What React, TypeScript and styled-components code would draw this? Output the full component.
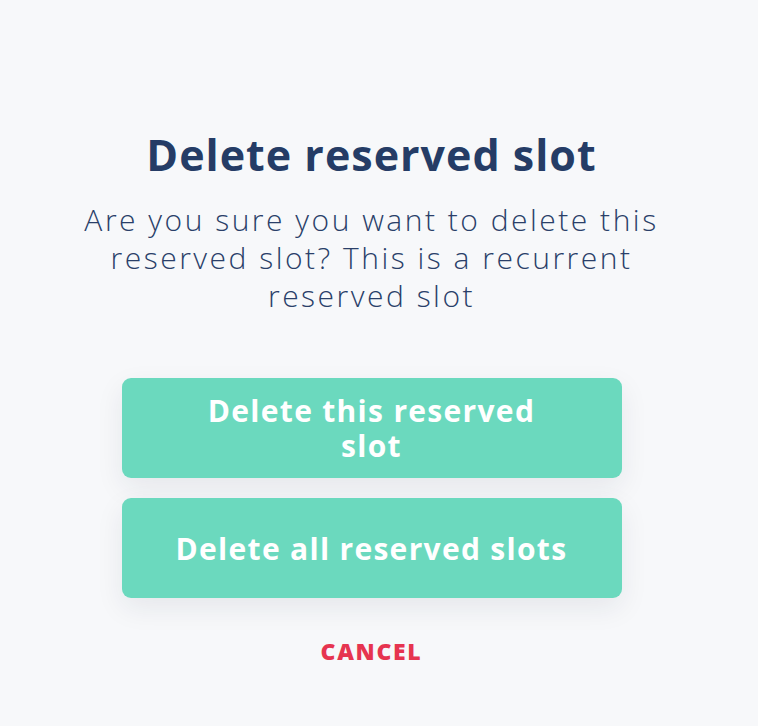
import styled, { createGlobalStyle } from "styled-components";

const Global = createGlobalStyle`
  html, body { margin: 0; padding: 0; background: #f7f8fa; }
  body { font-family: "Open Sans", Lato, sans-serif; -webkit-font-smoothing: antialiased; }
`;

const Page = styled.div`
  width: 743px;
  min-height: 726px;
  display: flex;
  flex-direction: column;
  align-items: center;
  padding-top: 127px;
  box-sizing: border-box;
`;

const Title = styled.h1`
  margin: 0;
  font-size: 43px;
  line-height: 56px;
  font-weight: 700;
  letter-spacing: 1px;
  color: #253c66;
  text-align: center;
`;

const Message = styled.p`
  margin: 18px 0 0;
  max-width: 600px;
  font-size: 30px;
  line-height: 38px;
  font-weight: 300;
  letter-spacing: 2.5px;
  color: #2a3f69;
  text-align: center;
`;

const Actions = styled.div`
  margin-top: 63px;
  width: 500px;
  display: flex;
  flex-direction: column;
  gap: 20px;
`;

const ActionBtn = styled.button`
  height: 100px;
  border: none;
  border-radius: 9px;
  background: #6bd9be;
  color: #fff;
  font-family: inherit;
  font-size: 30px;
  line-height: 35px;
  font-weight: 700;
  letter-spacing: 1.3px;
  padding: 0 52px;
  box-shadow: 0 10px 28px rgba(30, 40, 60, 0.08);
  cursor: pointer;
`;

const Cancel = styled.button`
  margin-top: 36px;
  border: none;
  background: none;
  color: #e63450;
  font-family: inherit;
  font-size: 23px;
  font-weight: 800;
  letter-spacing: 1.7px;
  text-transform: uppercase;
  cursor: pointer;
`;

export default function App() {
  return (
    <>
      <Global />
      <Page>
        <Title>Delete reserved slot</Title>
        <Message>
          Are you sure you want to delete this reserved slot? This is a recurrent reserved slot
        </Message>
        <Actions>
          <ActionBtn>Delete this reserved slot</ActionBtn>
          <ActionBtn>Delete all reserved slots</ActionBtn>
        </Actions>
        <Cancel>Cancel</Cancel>
      </Page>
    </>
  );
}
